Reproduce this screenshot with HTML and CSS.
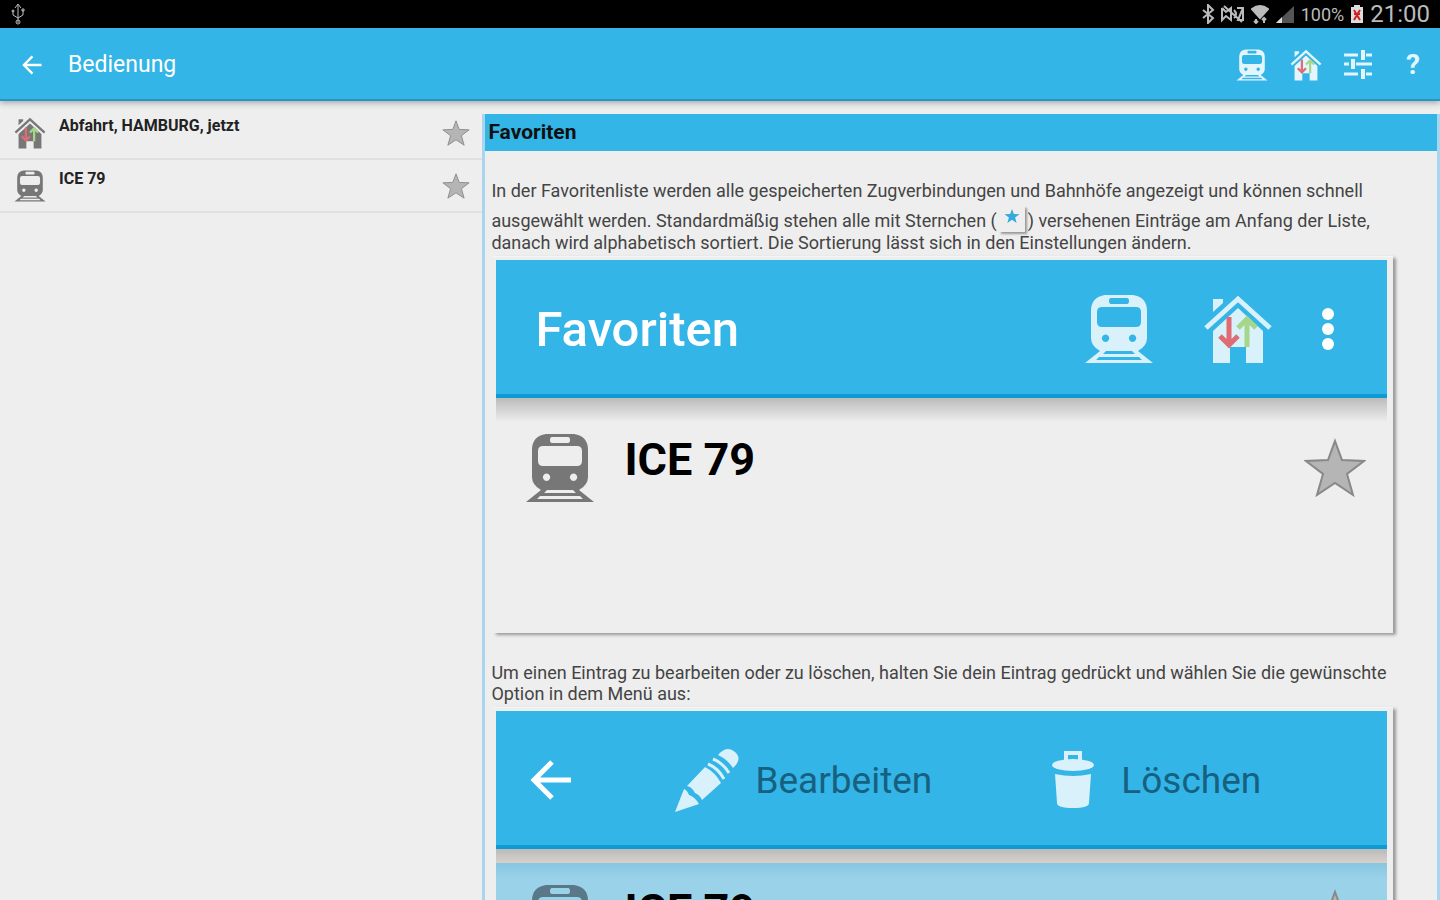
FILE: index.html
```html
<!DOCTYPE html>
<html lang="de">
<head>
<meta charset="UTF-8" />
<meta name="viewport" content="width=device-width, initial-scale=1" />
<title>Bedienung</title>
<link rel="stylesheet" href="styles.css">
</head>
<body>

<!-- Icon definitions -->
<svg class="defs" aria-hidden="true">
  <symbol id="train" viewBox="0 0 70 70">
    <path fill-rule="evenodd" d="M21 1h28q14 2 14 16v27q0 8-9 13l15 12H1l15-12Q7 52 7 44V17Q7 3 21 1z M27 4q-2 0-2 3t2 3h16q2 0 2-3t-2-3z M18 13q-5 0-5 5v10q0 5 5 5h34q5 0 5-5V18q0-5-5-5z M21.500 40.500a3.700 3.700 0 1 0 .1 0z M48.500 40.500a3.700 3.700 0 1 0 .1 0z M22 57l-3 3h32l-3-3z M15 63l-3 3h46l-3-3z" />
  </symbol>
  <symbol id="house" viewBox="0 0 70 70">
    <path d="M10 5h10v4L10 18z M10 69V37l25-23 25 23v32H43V53H27v16z" />
    <path d="M3 34 35 5l32 29" fill="none" stroke="currentColor" stroke-width="5" />
    <path class="down" d="M26 23v28M17 42l9 9 9-9" />
    <path class="up" d="M44 53V25M35 34l9-9 9 9" />
  </symbol>
  <symbol id="star" viewBox="0 0 62 60">
    <path d="M31 3l7 19 22 1-17 13 6 21-18-12-18 12 6-21L2 23l22-1z" />
  </symbol>
  <symbol id="back" viewBox="0 0 42 42">
    <path d="M41 21H4M22 3 4 21l18 18" fill="none" stroke="currentColor" stroke-width="5" />
  </symbol>
  <symbol id="pencil" viewBox="0 0 64 66">
    <path d="M0 65 9 42q3 1 5 6 6 2 10 9z M12 39 30 20q10 5 16 16L27 53q-2-5-7-7-3-6-8-7z M43 8q9-10 17-3t-2 16Q52 12 43 8z" />
    <path d="M33 17q10 4 16 15M38 12q10 4 16 14" fill="none" stroke="currentColor" stroke-width="3" />
  </symbol>
  <symbol id="trash" viewBox="0 0 42 60">
    <path d="M3 24q18 4 36 0l-2 29q0 5-16 5T5 53z" />
    <ellipse cx="21" cy="15" rx="21" ry="6" />
    <path d="M14 11V3h14v8" fill="none" stroke="currentColor" stroke-width="4" />
  </symbol>
</svg>

<div class="statusbar">
  <svg class="usb" viewBox="0 0 16 22"><path d="M8 20V2M5 5l3-4 3 4M3 7v5l5 3 5-3V7" /><circle cx="8" cy="19" r="2" /><circle cx="3" cy="8" r="1" /><path d="M12 6h2v2h-2z" /></svg>
  <div class="status-icons">
    <svg viewBox="0 0 14 20" width="14" height="20"><path d="M2 6l10 8-5 5V1l5 5-10 8" /></svg>
    <svg viewBox="0 0 24 20" width="24" height="20"><path d="M1 4l4 4 5-4v12l-5-4-4 4V4M3 2l18 16M13 6q4 4 0 8M16 4h6v12h-5l5-12" /></svg>
    <svg viewBox="0 0 18 20" width="18" height="20"><path d="M1 5q8-6 16 0l-8 9z" fill="#bbb" /><path d="M5 15v4M3 17l2 2 2-2M13 19v-5M11 16l2-2 2 2" /></svg>
    <svg viewBox="0 0 20 20" width="20" height="20"><path d="M1 19 19 2v17z" fill="#555" stroke="none" /><path d="M1 19l6-6v6z" fill="#ddd" stroke="none" /></svg>
    <span class="percent">100%</span>
    <svg viewBox="0 0 14 20" width="14" height="20"><path d="M1 3h3V1h6v2h3v16H1z" fill="#ddd" stroke="none" /><path d="M4 6l6 10M10 6 4 16M4 10h6" stroke="#c22" /></svg>
    <span class="clock">21:00</span>
  </div>
</div>

<header class="appbar">
  <button class="icon-btn back" aria-label="Zurück"><svg width="20" height="20"><use href="#back" /></svg></button>
  <h1>Bedienung</h1>
  <nav>
    <button class="icon-btn" aria-label="Zug"><svg width="32" height="32"><use href="#train" /></svg></button>
    <button class="icon-btn" aria-label="Bahnhof"><svg width="32" height="32"><use href="#house" /></svg></button>
    <button class="icon-btn" aria-label="Einstellungen"><svg width="28" height="30" viewBox="0 0 28 30"><path d="M0 5h14M22 5h6M0 14h5M12 14h16M0 24h14M22 24h6" stroke="currentColor" stroke-width="3" /><path d="M17 0h4v10h-4zM7 9h4v10H7zM17 19h4v10h-4z" /></svg></button>
    <button class="icon-btn help" aria-label="Hilfe">?</button>
  </nav>
</header>

<main>
  <ul class="list">
    <li>
      <svg class="item-icon"><use href="#house" /></svg>
      <a href="#abfahrt">Abfahrt, HAMBURG, jetzt</a>
      <button class="star-btn" aria-label="Favorit"><svg class="star"><use href="#star" /></svg></button>
    </li>
    <li>
      <svg class="item-icon"><use href="#train" /></svg>
      <a href="#ice79">ICE 79</a>
      <button class="star-btn" aria-label="Favorit"><svg class="star"><use href="#star" /></svg></button>
    </li>
  </ul>

  <section class="help-page">
    <h2>Favoriten</h2>
    <div class="content">
      <p>In der Favoritenliste werden alle gespeicherten Zugverbindungen und Bahnhöfe angezeigt und können schnell ausgewählt werden. Standardmäßig stehen alle mit Sternchen (<span class="star-sample"><svg width="16" height="16"><use href="#star" /></svg></span>) versehenen Einträge am Anfang der Liste, danach wird alphabetisch sortiert. Die Sortierung lässt sich in den Einstellungen ändern.</p>

      <figure class="tall">
        <div class="demo-bar">
          <span class="demo-title">Favoriten</span>
          <svg class="demo-icon"><use href="#train" /></svg>
          <svg class="demo-icon"><use href="#house" /></svg>
          <svg class="dots" viewBox="0 0 12 42"><circle cx="6" cy="6" r="6" /><circle cx="6" cy="21" r="6" /><circle cx="6" cy="36" r="6" /></svg>
        </div>
        <div class="demo-row">
          <svg class="demo-icon"><use href="#train" /></svg>
          <strong>ICE 79</strong>
          <svg class="demo-star star"><use href="#star" /></svg>
        </div>
      </figure>

      <p>Um einen Eintrag zu bearbeiten oder zu löschen, halten Sie dein Eintrag gedrückt und wählen Sie die gewünschte Option in dem Menü aus:</p>

      <figure>
        <div class="demo-bar actions">
          <svg class="demo-back"><use href="#back" /></svg>
          <span class="action"><svg width="64" height="66"><use href="#pencil" /></svg>Bearbeiten</span>
          <span class="action delete"><svg width="42" height="60"><use href="#trash" /></svg>Löschen</span>
        </div>
        <div class="demo-row selected">
          <svg class="demo-icon"><use href="#train" /></svg>
          <strong>ICE 79</strong>
          <svg class="demo-star star"><use href="#star" /></svg>
        </div>
      </figure>
    </div>
  </section>
</main>

</body>
</html>
```
FILE: styles.css
```css
* {
  box-sizing: border-box;
}
body {
  font-family: Roboto, "Liberation Sans", sans-serif;
  background: #eee;
  color: #444;
  margin: 0;
  height: 100vh;
  overflow: hidden;
  display: flex;
  flex-direction: column;
}
svg {
  fill: currentColor;
  flex-shrink: 0;
}
.defs {
  position: absolute;
  width: 0; height: 0;
}
.down, .up {
  fill: none;
  stroke: #df6b75;
  stroke-width: 5;
}
.up {
  stroke: #a5d68a;
}

/* Status bar */
.statusbar {
  display: flex;
  justify-content: space-between;
  align-items: center;
  height: 28px;
  flex-shrink: 0;
  padding: 0 10px;
  background: #000;
  color: #bbb;
}
.statusbar svg {
  fill: none;
  stroke: #bbb;
  stroke-width: 2;
}
.statusbar .usb {
  width: 16px; height: 22px;
  stroke-width: 1;
}
.status-icons {
  display: flex;
  align-items: center;
  gap: 6px;
}
.percent {
  font-size: 18px;
}
.clock {
  font-size: 24px;
  line-height: 28px;
}

/* App bar */
.appbar {
  display: flex;
  align-items: center;
  height: 73px;
  flex-shrink: 0;
  padding: 2px 20px 0 22px;
  background: #33b5e7;
  border-bottom: 2px solid #2b93bf;
  box-shadow: 0 2px 6px rgba(0,0,0,0.3);
  color: white;
  z-index: 1;
}
.appbar h1 {
  margin: 0 0 0 26px;
  font-size: 23px;
  font-weight: normal;
  line-height: 30px;
}
.appbar nav {
  display: flex;
  align-items: center;
  gap: 22px;
  margin-left: auto;
  color: #e4f6fd;
}
.icon-btn {
  display: flex;
  padding: 0;
  border: none;
  background: none;
  color: inherit;
  cursor: pointer;
}
.help {
  margin-left: 12px;
  font: bold 28px Roboto, sans-serif;
}

main {
  display: flex;
  flex: 1;
  min-height: 0;
}

/* Saved connections */
.list {
  flex: 1;
  margin: 0;
  padding: 6px 0 0;
  list-style: none;
}
.list li {
  display: flex;
  align-items: center;
  height: 53px;
  padding: 0 12px 0 14px;
  border-bottom: 2px solid #e0e0e0;
}
.list a {
  flex: 1;
  align-self: flex-start;
  margin: 9px 0 0 13px;
  color: #222;
  font-size: 16px;
  font-weight: bold;
  line-height: 20px;
  text-decoration: none;
}
.item-icon {
  width: 32px; height: 32px;
  color: #777;
}
.star {
  width: 28px; height: 28px;
  color: #b5b5b5;
  stroke: #888;
  stroke-width: 2;
}
.star-btn {
  display: flex;
  padding: 0;
  border: none;
  background: none;
  cursor: pointer;
}

/* Help page */
.help-page {
  flex: 0 0 66.5%;
  margin-top: 13px;
  border: 3px solid #a9d5ee;
  border-width: 0 3px;
  overflow: hidden;
}
.help-page h2 {
  margin: 0 -2px;
  padding: 0 5px;
  background: #33b5e7;
  color: #111;
  font-size: 21px;
  line-height: 37px;
}
.content {
  padding: 0 40px 0 6px;
}
.content p {
  margin: 29px 0 3px;
  font-size: 18px;
  line-height: 21px;
}
.star-sample {
  display: inline-block;
  width: 26px; height: 26px;
  margin: 5px 3px 0 2px;
  padding: 2px 5px;
  box-shadow: 2px 2px 2px #999;
  color: #33a9dc;
  vertical-align: -5px;
}
.star-sample svg {
  display: block;
}
figure {
  margin: 0 4px 0 2px;
  padding: 3px 6px 0 3px;
  border-top: 1px solid #f6f6f6;
  box-shadow: 3px 2px 3px #999;
}
figure.tall {
  min-height: 377px;
}
.demo-bar {
  display: flex;
  align-items: center;
  height: 138px;
  padding: 0 53px 0 39px;
  background: #33b5e7;
  box-shadow: inset 0 -4px #0c9bd2;
  color: #d8f1fb;
}
.demo-title {
  margin-right: auto;
  color: white;
  font-size: 49px;
  font-weight: 500;
}
.demo-icon {
  width: 70px; height: 70px;
}
.demo-bar .demo-icon {
  margin-right: 49px;
}
.dots {
  width: 12px; height: 42px;
  color: white;
}
.actions {
  padding: 0 0 0 34px;
}
.demo-back {
  width: 42px; height: 42px;
  margin-right: 103px;
  color: white;
}
.action {
  display: flex;
  align-items: center;
  gap: 16px;
  margin-right: 120px;
  font-size: 37px;
  color: #17607f;
}
.action svg {
  color: #d8f1fb;
}
.delete {
  gap: 27px;
}
.demo-row {
  display: flex;
  align-items: flex-start;
  padding: 35px 21px 30px 29px;
  background: linear-gradient(#bbb, #eee 24px);
  color: #777;
}
.demo-row strong {
  flex: 1;
  margin-left: 29px;
  color: #000;
  font-size: 45px;
  line-height: 54px;
}
.demo-star {
  width: 62px; height: 60px;
  margin-top: 5px;
}
.selected {
  background: linear-gradient(#bbb, #d8d0cc 14px, #88c6df 14px, #9ad2ea 30px);
  color: #5a7888;
}
```
